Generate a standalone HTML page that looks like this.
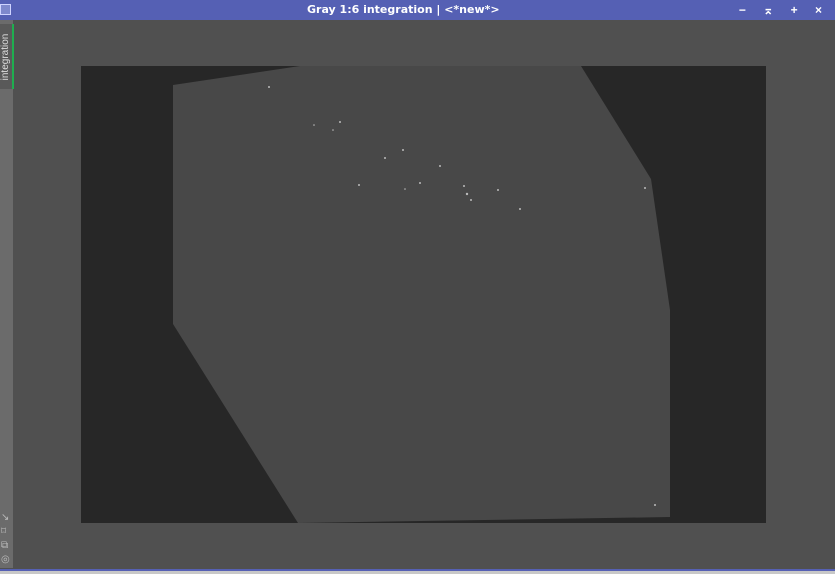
<!DOCTYPE html>
<html><head><meta charset="utf-8"><style>
html,body{margin:0;padding:0;width:835px;height:574px;overflow:hidden;background:#505050;font-family:"Liberation Sans",sans-serif}
#title{position:absolute;left:0;top:0;width:835px;height:20px;background:#5560b4;color:#fff;font-weight:bold;font-size:12px;line-height:20px}
#tt{position:absolute;left:307px;top:0;font-family:"DejaVu Sans",sans-serif;font-size:11px;white-space:nowrap}
#side{position:absolute;left:0;top:20px;width:13px;height:548px;background:#6b6b6b}
#tab{position:absolute;left:0;top:24px;width:12px;height:65px;background:#595959;border-right:2px solid #1fae4f}
#tab span{position:absolute;left:-27px;top:27px;transform:rotate(-90deg);color:#ddd;font-size:10px;width:66px;text-align:center;line-height:12px}
#bot{position:absolute;left:0;top:569px;width:835px;height:2px;background:#5560b4}
#bot2{position:absolute;left:0;top:571px;width:835px;height:3px;background:#c8c8c8}
.ic{position:absolute;left:1px;color:#bbb;font-size:10px;line-height:10px}
</style></head><body>
<div id="title"><span id="tt">Gray 1:6 integration | &lt;*new*&gt;</span>
<div style="position:absolute;left:0;top:4px;width:11px;height:11px;border:1px solid #cfd3ff;background:#7e88cc;box-sizing:border-box"></div>
<div style="position:absolute;right:6px;top:0;font-size:12px;letter-spacing:7px">− ⌅ + ×</div>
</div>
<div id="side"></div>
<div id="tab"><span>integration</span></div>
<div class="ic" style="top:513px">↘</div>
<div class="ic" style="top:527px">⌑</div>
<div class="ic" style="top:541px">⧉</div>
<div class="ic" style="top:555px">◎</div>
<svg style="position:absolute;left:0;top:0" width="835" height="574">
<rect x="81" y="66" width="685" height="457" fill="#272727"/>
<polygon points="173,85 300,66 581,66 651,179 670,310 670,517 298,523 173,324" fill="#484848"/>
<g fill="#bbb">
<circle cx="269" cy="87" r="1"/><circle cx="340" cy="122" r="1"/><circle cx="403" cy="150" r="1"/><circle cx="420" cy="183" r="1"/><circle cx="440" cy="166" r="1"/><circle cx="464" cy="186" r="1"/><circle cx="467" cy="194" r="1.2"/><circle cx="471" cy="200" r="1"/><circle cx="498" cy="190" r="1"/><circle cx="520" cy="209" r="1"/><circle cx="359" cy="185" r="1"/><circle cx="385" cy="158" r="1"/><circle cx="333" cy="130" r="0.8"/><circle cx="314" cy="125" r="0.8"/><circle cx="405" cy="189" r="0.8"/><circle cx="645" cy="188" r="1"/><circle cx="655" cy="505" r="1"/>
</g>
</svg>
<div id="bot"></div><div id="bot2"></div>
</body></html>
